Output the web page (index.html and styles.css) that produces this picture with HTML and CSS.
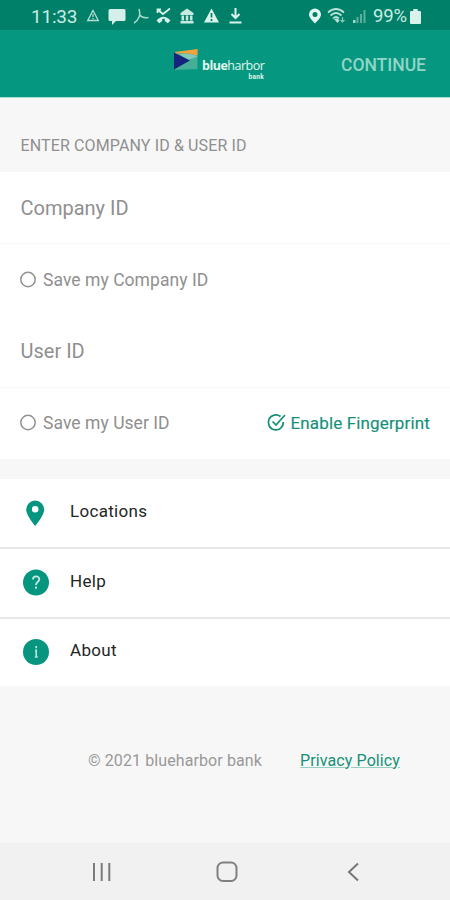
FILE: index.html
```
<!DOCTYPE html>
<html lang="en">
<head>
<meta charset="utf-8">
<title>blueharbor bank</title>
<link rel="stylesheet" href="styles.css">
</head>
<body>
<div class="status">
  <span class="clock">11:33</span>
  <svg class="notices" width="156" height="20" viewBox="0 0 156 20">
    <path d="M7 4.500 12.300 14.500H1.700Z" fill="none" stroke="#b5dfd5" stroke-width="1.300"/>
    <path d="M7 8v3M7 12v1.300" stroke="#b5dfd5" stroke-width="1.200"/>
    <path d="M24 3h14q1.500 0 1.500 1.500v9q0 1.500-1.500 1.500h-8l-4 4v-4h-2q-1.500 0-1.500-1.500v-9Q22.500 3 24 3Z" fill="#d5f0ea"/>
    <path d="M53 3q1.500 5 0 8c-1 3-3 5-5 6M53.500 9q3 3.500 9 2.500" fill="none" stroke="#a9dacd" stroke-width="1.500"/>
    <path d="M71.500 7V3.500H75M72 4l5 4 7-5.500" fill="none" stroke="#d5f0ea" stroke-width="1.800"/>
    <path d="M70.500 14.500q7-7.500 14 0l-2.700 2.800-3-2.300v-2q-1.300-.5-2.600 0v2l-3 2.300Z" fill="#d5f0ea"/>
    <path d="M94.500 7 101 2.500 107.500 7v2h-13ZM95.500 9.500h2.500v5h-2.500zM99.800 9.500h2.500v5h-2.500zM104 9.500h2.500v5h-2.500zM94.500 15h13v2.500h-13z" fill="#c8e9e1"/>
    <path d="M125.500 2.500 133 16.500h-15Z" fill="#d9f2ec"/>
    <path d="M125.500 7v4.500M125.500 13v2" stroke="#008068" stroke-width="1.700"/>
    <path d="M149.500 2v10M145.500 8l4 4 4-4M143.500 16.500h12" fill="none" stroke="#d9f2ec" stroke-width="2"/>
  </svg>
  <svg class="signals" width="64" height="20" viewBox="0 0 64 20">
    <path d="M9 2.500a6 6 0 0 0-6 6c0 3.500 6 9 6 9s6-5.500 6-9a6 6 0 0 0-6-6Zm0 3.500a2.500 2.500 0 1 1 0 5 2.500 2.500 0 0 1 0-5Z" fill="#e2f6f2"/>
    <g fill="none" stroke="#bce3da" stroke-width="1.700"><path d="M22 6.500q8-7 16 0M24.500 9.500q5.500-5 11 0M27 12.500q3-3 6 0"/></g>
    <path d="m28 13 3.500 4 2-2.500-2-2Z" fill="#bce3da"/><path d="M36.500 11v5m-2-2 2 2 2-2" fill="none" stroke="#8bc7b9" stroke-width="1.200"/>
    <path d="M47 14h2.500v3H47z" fill="#a9d8cc"/><path d="M50.500 11h2v6h-2zM54 8h2v9h-2zM57.500 4h2v13h-2z" fill="#5dae9d"/>
  </svg>
  <span class="percent">99%</span>
  <svg class="battery" width="11" height="15" viewBox="0 0 10 15" preserveAspectRatio="none"><path d="M3 0h4v2h2q1 0 1 1v11q0 1-1 1H1q-1 0-1-1V3q0-1 1-1h2Z" fill="#d9f2ec"/></svg>
</div>
<header class="header">
  <div class="brand">
    <svg class="flag" width="24" height="23" viewBox="0 0 24 23">
      <path d="M1 3 23.500 1v19L1 21Z" fill="#45af98"/>
      <path d="M1 3 23.500 0v6.500Q13 3.500 1 4.500Z" fill="#f3a13b"/>
      <path d="M5 5Q17 4 23.500 7.500L14 11Z" fill="#83cab8"/>
      <path d="M0 3.500 16 11.500 0 20.500Z" fill="#17247e"/>
    </svg>
    <div class="wordmark"><span class="name"><b>blue</b>harbor</span><span class="sub">bank</span></div>
  </div>
  <span class="continue">CONTINUE</span>
</header>
<h1 class="title"><span>ENTER COMPANY ID &amp; USER ID</span></h1>
<main class="form">
  <div class="field">Company ID</div>
  <div class="option"><svg class="radio" width="16" height="16" viewBox="0 0 16 16"><circle cx="8" cy="7.500" r="7.200" fill="none" stroke="#929292" stroke-width="1.500"/></svg><span>Save my Company ID</span></div>
  <div class="field">User ID</div>
  <div class="option"><svg class="radio" width="16" height="16" viewBox="0 0 16 16"><circle cx="8" cy="7.500" r="7.200" fill="none" stroke="#929292" stroke-width="1.500"/></svg><span>Save my User ID</span>
    <div class="finger"><svg width="20" height="20" viewBox="0 0 20 20" fill="none" stroke="#149078" stroke-width="1.700"><path d="M14.500 3.500A7.500 7.500 0 1 0 17.300 9M6.500 8.500l3.500 3.500L19 2"/></svg><span>Enable Fingerprint</span></div>
  </div>
</main>
<nav class="links">
  <div class="link"><svg width="26" height="28" viewBox="0 0 26 28"><path d="M12.200 1.500a9 9 0 0 0-9 9c0 6 9 16.500 9 16.500s9-10.500 9-16.500a9 9 0 0 0-9-9Zm0 5.500a3.300 3.300 0 1 1 0 6.600 3.300 3.300 0 0 1 0-6.600Z" fill="#06957e"/></svg><span>Locations</span></div>
  <div class="link"><svg width="26" height="28" viewBox="0 0 26 28"><circle cx="13" cy="13.500" r="13" fill="#06957e"/><path d="M9.900 10.500c.2-4.200 6.400-4 6.400-.3 0 2.800-3.300 2.700-3.300 5.800M13 17.500v2.300" fill="none" stroke="#c4ece3" stroke-width="1.800"/></svg><span>Help</span></div>
  <div class="link"><svg width="26" height="28" viewBox="0 0 26 28"><circle cx="13" cy="14" r="13" fill="#06957e"/><path d="M13.200 8v2.300M12 12.300h1.200v6.700M11.800 19h3" fill="none" stroke="#b5e3d9" stroke-width="1.700"/></svg><span>About</span></div>
</nav>
<footer class="footer"><span class="copyright">© 2021 blueharbor bank</span><a class="privacy">Privacy Policy</a></footer>
<div class="system">
  <svg width="20" height="20" viewBox="0 0 20 20"><path d="M2 1v18M9.700 1v18M17.300 1v18" stroke="#7b7b7b" stroke-width="2"/></svg>
  <svg class="home" width="22" height="22" viewBox="0 0 22 22"><rect x="1.500" y="1.500" width="19" height="18.500" rx="5.500" fill="none" stroke="#808080" stroke-width="2"/></svg>
  <svg width="12" height="20" viewBox="0 0 12 20"><path d="M11 1.500 2 10l9 8.500" fill="none" stroke="#777" stroke-width="2"/></svg>
</div>
</body>
</html>
```
FILE: styles.css
```
* { box-sizing: border-box; }
body { margin: 0; width: 450px; height: 900px; display: flex; flex-direction: column; background: #f7f7f7; font-family: Roboto, sans-serif; color: #8f8f8f; overflow: hidden; white-space: nowrap; }
svg { display: block; flex: none; }
.status { height: 30px; flex: none; background: #008068; display: flex; align-items: center; padding: 2px 0 0 31px; color: #caebe3; }
.clock { width: 55px; font-size: 19px; letter-spacing: -0.2px; }
.signals { margin-left: 64px; }
.percent { width: 37px; margin-left: 3px; font-size: 18.5px; letter-spacing: -0.2px; }
.header { height: 68px; flex: none; background: #05977f; border-bottom: 1px solid #a9dcd1; display: flex; align-items: center; justify-content: space-between; padding: 0 24px 0 174px; }
.brand { display: flex; align-items: flex-start; gap: 4px; margin-top: 1px; height: 30px; }
.wordmark { display: flex; flex-direction: column; width: 62px; padding-top: 8px; color: #e1f8f1; }
.name { font: 12.5px/17px "Open Sans", sans-serif; letter-spacing: -0.5px; }
.sub { align-self: flex-end; font: bold 6.5px/7px Roboto, sans-serif; letter-spacing: 0.3px; }
.continue { font-size: 17.5px; font-weight: 500; color: #93d5c6; letter-spacing: 0; margin-top: 3px; }
.title { height: 74px; flex: none; margin: 0; padding: 21px 20.5px 0; display: flex; align-items: center; font-size: 16px; font-weight: 400; letter-spacing: 0.13px; }
.form { height: 287px; flex: none; background: #fff; }
.field { height: 72px; padding-left: 20.5px; display: flex; align-items: center; border-bottom: 1px solid #fafafa; font-size: 20px; letter-spacing: 0; }
.option { height: 71.5px; padding: 0 20px; display: flex; align-items: center; font-size: 17.5px; letter-spacing: 0.05px; }
.radio { margin-right: 7px; overflow: visible; }
.finger { margin-left: auto; display: flex; align-items: center; gap: 4px; color: #149078; font-size: 17px; letter-spacing: 0.15px; -webkit-text-stroke: 0.15px #149078; }
.links { height: 227px; flex: none; border-top: 20px solid #f7f7f7; background: #fff; }
.link { height: 70px; display: flex; align-items: center; gap: 21px; padding-left: 23px; border-bottom: 2px solid #e8e8e8; font-size: 17px; color: #252525; letter-spacing: 0.3px; }
.link svg { margin-top: -1px; }
.link span { margin-top: -5px; }
.link:last-child { border: 0; height: 67px; }
.footer { height: 157px; flex: none; display: flex; align-items: center; padding: 0 50px 9px 88px; justify-content: space-between; font-size: 16px; letter-spacing: 0.1px; color: #999; }
.privacy { color: #159078; text-decoration: underline; text-decoration-color: #94cfc2; }
.system { flex: 1; display: flex; align-items: center; justify-content: space-between; padding: 0 91px 0 92px; background: #f1f1f1; }
.home { margin-right: 5px; }
```
